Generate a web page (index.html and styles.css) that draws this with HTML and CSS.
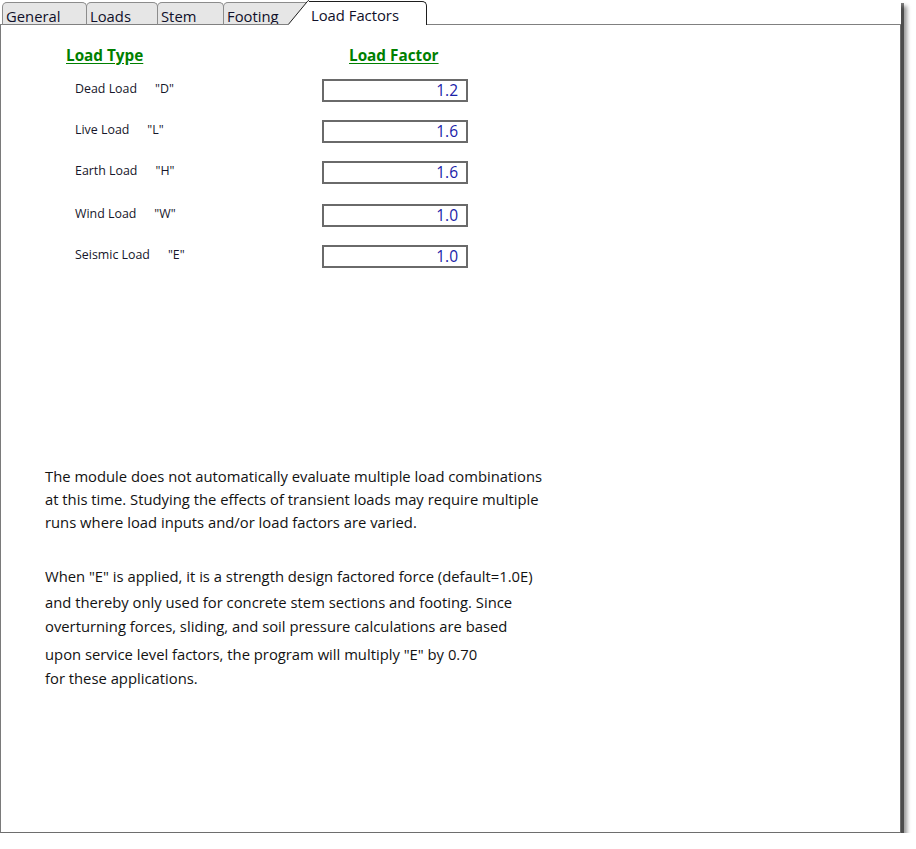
FILE: index.html
```html
<!DOCTYPE html>
<html>
<head>
<meta charset="utf-8">
<link rel="stylesheet" href="styles.css">
</head>
<body>
<div class="window">
  <div class="tabstrip">
    <div class="edge"></div>
    <div class="tab tab-general">General</div>
    <div class="tab tab-loads">Loads</div>
    <div class="tab tab-stem">Stem</div>
    <div class="tab tab-footing">Footing</div>
    <div class="tab-active">
      <svg class="slant" width="21" height="25" viewBox="0 0 21 25"><polygon points="0,25 20,0.5 21,0.5 21,25" fill="#fff"/><path d="M0.3 24.5 L19.6 1.2 Q20 0.5 21 0.5" fill="none" stroke="#1e1e1e" stroke-width="1"/></svg>
      <div class="active-label">Load Factors</div>
    </div>
    <div class="filler"></div>
  </div>
  <div class="panel">
    <div class="factors">
      <div class="head head-type">Load Type</div>
      <div class="head head-factor">Load Factor</div>

      <div class="label"><span class="name">Dead Load</span><span class="code">"D"</span></div>
      <div class="field">1.2</div>

      <div class="label"><span class="name">Live Load</span><span class="code">"L"</span></div>
      <div class="field">1.6</div>

      <div class="label"><span class="name">Earth Load</span><span class="code">"H"</span></div>
      <div class="field">1.6</div>

      <div class="label"><span class="name">Wind Load</span><span class="code">"W"</span></div>
      <div class="field">1.0</div>

      <div class="label"><span class="name">Seismic Load</span><span class="code">"E"</span></div>
      <div class="field">1.0</div>
    </div>

    <div class="notes">
      <div class="note">
        <div class="line">The module does not automatically evaluate multiple load combinations</div>
        <div class="line l-short">at this time. Studying the effects of transient loads may require multiple</div>
        <div class="line">runs where load inputs and/or load factors are varied.</div>
      </div>
      <div class="note note-2">
        <div class="line">When "E" is applied, it is a strength design factored force (default=1.0E)</div>
        <div class="line l-gap">and thereby only used for concrete stem sections and footing. Since</div>
        <div class="line">overturning forces, sliding, and soil pressure calculations are based</div>
        <div class="line l-wide">upon service level factors, the program will multiply "E" by 0.70</div>
        <div class="line">for these applications.</div>
      </div>
    </div>
  </div>
</div>
</body>
</html>
```

FILE: styles.css
```css
html, body {
  margin: 0;
  padding: 0;
  background: #ffffff;
}

body {
  font-family: "Open Sans", "Noto Sans", "Liberation Sans", sans-serif;
  color: #141414;
}

.window {
  width: 901px;
  height: 833px;
  background: #ffffff;
  box-shadow: 3px 3px 0 rgba(0, 0, 0, 0.5), 6px 6px 4px rgba(0, 0, 0, 0.4);
  display: flex;
  flex-direction: column;
}

/* ---------- tabs ---------- */
.tabstrip {
  display: flex;
  align-items: flex-end;
  height: 25px;
  flex: none;
}

.edge {
  width: 2px;
  height: 25px;
  box-sizing: border-box;
  border-bottom: 1px solid #808080;
}

.tab {
  height: 23px;
  box-sizing: border-box;
  padding: 3px 0 0 3px;
  line-height: 21px;
  font-size: 14.8px;
  color: #10102a;
  background: #e6e6e6;
  border: 1px solid #8c8c8c;
  border-bottom-color: #808080;
  border-radius: 5px 5px 0 0;
  overflow: hidden;
  white-space: nowrap;
}

.tab + .tab {
  margin-left: -1px;
}

.tab-general { width: 85px; }
.tab-loads { width: 72px; }
.tab-stem { width: 67px; }
.tab-footing { width: 90px; }

.tab-active {
  display: flex;
  margin-left: -25px;
  height: 24px;
}

.slant {
  display: block;
  flex: none;
  margin-top: -1px;
}

.active-label {
  width: 118px;
  height: 24px;
  box-sizing: border-box;
  padding: 3px 0 0 2px;
  line-height: 20px;
  font-size: 14.8px;
  color: #10102a;
  background: #ffffff;
  border-top: 1px solid #1e1e1e;
  border-right: 1px solid #1e1e1e;
  border-top-right-radius: 5px;
  overflow: hidden;
  white-space: nowrap;
}

.filler {
  flex: 1;
  height: 25px;
  box-sizing: border-box;
  border-bottom: 1px solid #808080;
}

/* ---------- panel ---------- */
.panel {
  flex: 1;
  border-left: 1px solid #7a7a7a;
  border-right: 1px solid #6e6e6e;
  border-bottom: 1px solid #6e6e6e;
  padding: 20px 0 0 65px;
}

.factors {
  display: grid;
  grid-template-columns: 256px 146px;
  grid-template-rows: 34px 41px 41px 43px 41px 41px;
  align-items: start;
}

.head {
  font-weight: 700;
  font-size: 15.3px;
  line-height: 20px;
  color: #008000;
  text-decoration: underline;
  text-underline-offset: 2px;
}

.head-factor {
  margin-left: 27px;
}

.label {
  padding: 1px 0 0 9px;
  font-size: 12.4px;
  line-height: 18px;
  color: #16162a;
  white-space: nowrap;
}

.label .code {
  margin-left: 18px;
}

.field {
  height: 23px;
  box-sizing: border-box;
  border: 2px solid #6a6a6a;
  text-align: right;
  padding-right: 8px;
  font-size: 15.5px;
  line-height: 19px;
  color: #1a22a8;
}

/* ---------- notes ---------- */
.notes {
  margin: 178px 0 0 -21px;
  font-size: 14.8px;
  color: #121212;
}

.line {
  line-height: 24px;
  white-space: nowrap;
}

.l-short {
  line-height: 22px;
}

.note-2 {
  margin-top: 30px;
}

.l-gap {
  margin-top: 2px;
}

.l-wide {
  margin-top: 4px;
}
```
